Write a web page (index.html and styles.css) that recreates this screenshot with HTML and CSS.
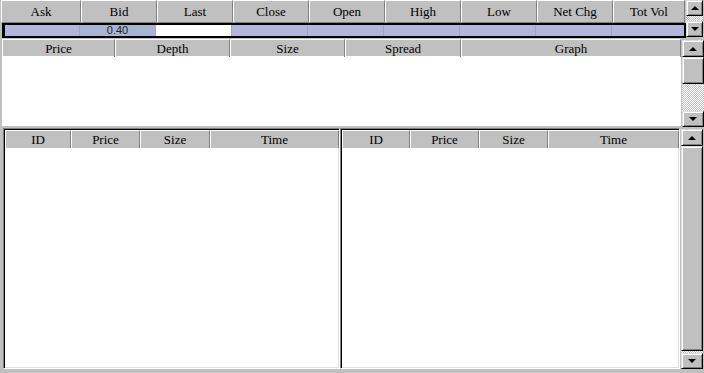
FILE: index.html
```html
<!DOCTYPE html>
<html lang="en">
<head>
    <meta charset="UTF-8">
    <title>Quote Monitor</title>
    <link rel="stylesheet" href="styles.css">
</head>
<body>
    <div class="window">
        <div class="quote">
            <div class="quote-grid">
                <div class="quote-head">
                    <div class="hcell">Ask</div>
                    <div class="hcell">Bid</div>
                    <div class="hcell">Last</div>
                    <div class="hcell">Close</div>
                    <div class="hcell">Open</div>
                    <div class="hcell">High</div>
                    <div class="hcell">Low</div>
                    <div class="hcell">Net Chg</div>
                    <div class="hcell">Tot Vol</div>
                </div>
                <div class="quote-data">
                    <div class="dcell"></div>
                    <div class="dcell bid">0.40</div>
                    <div class="dcell last"></div>
                    <div class="dcell"></div>
                    <div class="dcell"></div>
                    <div class="dcell"></div>
                    <div class="dcell"></div>
                    <div class="dcell"></div>
                    <div class="dcell"></div>
                </div>
            </div>
            <div class="vscroll vscroll-sm">
                <div class="sbtn"><span class="arrow up"></span></div>
                <div class="track"></div>
                <div class="sbtn"><span class="arrow down"></span></div>
            </div>
        </div>

        <div class="depth">
            <div class="depth-list">
                <div class="list-head depth-head">
                    <div class="lcell">Price</div>
                    <div class="lcell">Depth</div>
                    <div class="lcell">Size</div>
                    <div class="lcell">Spread</div>
                    <div class="lcell">Graph</div>
                </div>
            </div>
            <div class="vscroll vscroll-md">
                <div class="sbtn"><span class="arrow up"></span></div>
                <div class="thumb thumb-md"></div>
                <div class="track"></div>
                <div class="sbtn"><span class="arrow down"></span></div>
            </div>
        </div>

        <div class="book">
            <div class="pane pane-left">
                <div class="list-head trades-head-left">
                    <div class="lcell">ID</div>
                    <div class="lcell">Price</div>
                    <div class="lcell">Size</div>
                    <div class="lcell">Time</div>
                </div>
            </div>
            <div class="pane pane-right">
                <div class="list-head trades-head-right">
                    <div class="lcell">ID</div>
                    <div class="lcell">Price</div>
                    <div class="lcell">Size</div>
                    <div class="lcell">Time</div>
                </div>
            </div>
            <div class="vscroll vscroll-lg">
                <div class="sbtn"><span class="arrow up"></span></div>
                <div class="thumb thumb-lg"></div>
                <div class="track track-thin"></div>
                <div class="sbtn"><span class="arrow down"></span></div>
            </div>
        </div>
    </div>
</body>
</html>
```

FILE: styles.css
```css
* {
    box-sizing: border-box;
}

body {
    margin: 0;
    background: #c0c0c0;
    font-family: "Liberation Serif", "Times New Roman", serif;
    font-size: 13px;
    color: #000;
}

.window {
    width: 704px;
    height: 373px;
    display: flex;
    flex-direction: column;
    overflow: hidden;
}

/* ---- quote strip ---- */

.quote {
    display: flex;
    height: 38px;
}

.quote-grid {
    width: 686px;
}

.quote-head {
    display: grid;
    grid-template-columns: 80px repeat(7, 76px) 1fr;
    height: 23px;
    margin-left: 1px;
    margin-right: 1px;
}

.hcell {
    display: flex;
    align-items: center;
    justify-content: center;
    border-top: 1px solid #fff;
    border-left: 1px solid #fff;
    border-right: 1px solid #808080;
    border-bottom: 1px solid #808080;
    padding-top: 1px;
}

.quote-data {
    display: grid;
    grid-template-columns: 75px repeat(7, 76px) 1fr;
    height: 15px;
    margin-left: 2px;
    border: 2px solid #000;
    border-left-width: 3px;
}

.dcell {
    background: #b4b4dc;
    border-right: 1px solid #a0a0c8;
    display: flex;
    align-items: center;
    justify-content: center;
    font-family: "Liberation Sans", Arial, sans-serif;
    font-size: 11px;
    line-height: 11px;
    color: #202020;
}

.dcell.bid {
    background: #a8b4d4;
}

.dcell.last {
    background: #fff;
}

.dcell:last-child {
    border-right: none;
}

/* ---- scrollbars ---- */

.vscroll {
    display: flex;
    flex-direction: column;
}

.vscroll-sm {
    width: 17px;
    height: 37px;
}

.vscroll-md {
    width: 22px;
    height: 87px;
    margin-top: 1px;
    margin-left: 1px;
}

.vscroll-lg {
    width: 22px;
    height: 240px;
    margin-top: 1px;
    margin-left: 1px;
}

.sbtn,
.thumb {
    background: #c0c0c0;
    border-top: 1px solid #dfdfdf;
    border-left: 1px solid #dfdfdf;
    border-right: 1px solid #000;
    border-bottom: 1px solid #000;
    box-shadow: inset 1px 1px #fff, inset -1px -1px #808080;
}

.sbtn {
    height: 16px;
    flex: none;
    display: flex;
    align-items: center;
    justify-content: center;
}

.vscroll-md .sbtn:first-child,
.vscroll-lg .sbtn:first-child {
    height: 17px;
}

.thumb-md {
    height: 27px;
    flex: none;
}

.thumb-lg {
    flex: 1;
}

.track {
    flex: 1;
    background: repeating-conic-gradient(#c0c0c0 0 25%, #fff 0 50%) 0 0 / 2px 2px;
}

.track-thin {
    flex: none;
    height: 2px;
}

.arrow {
    width: 0;
    height: 0;
    border-left: 4px solid transparent;
    border-right: 4px solid transparent;
}

.arrow.up {
    border-bottom: 4px solid #000;
}

.arrow.down {
    border-top: 4px solid #000;
}

/* ---- depth list ---- */

.depth {
    display: flex;
    margin-top: 1px;
    height: 88px;
}

.depth-list {
    width: 679px;
    height: 87px;
    margin-left: 2px;
    background: #fff;
}

.list-head {
    display: grid;
    height: 17px;
    background: #c0c0c0;
}

.depth-head {
    grid-template-columns: 113px 115px 115px 116px 1fr;
}

.lcell {
    display: flex;
    align-items: center;
    justify-content: center;
    border-left: 1px solid #fff;
    border-top: 1px solid #fff;
    border-right: 1px solid #808080;
    padding-top: 1px;
}

/* ---- trade panes ---- */

.book {
    display: flex;
    margin-top: 1px;
    height: 242px;
}

.pane {
    height: 241px;
    background: #fff;
    border-top: 1px solid #808080;
    border-left: 1px solid #808080;
    border-right: 1px solid #fff;
    border-bottom: 1px solid #fff;
    box-shadow: inset 1px 1px #000, inset -1px -1px #dfdfdf;
    padding: 1px 0 0 1px;
}

.pane-left {
    width: 337px;
    margin-left: 3px;
}

.pane-right {
    width: 340px;
}

.trades-head-left {
    grid-template-columns: 66px 69px 70px 1fr;
    height: 18px;
}

.trades-head-right {
    grid-template-columns: 68px 69px 69px 1fr;
    height: 18px;
}
```
